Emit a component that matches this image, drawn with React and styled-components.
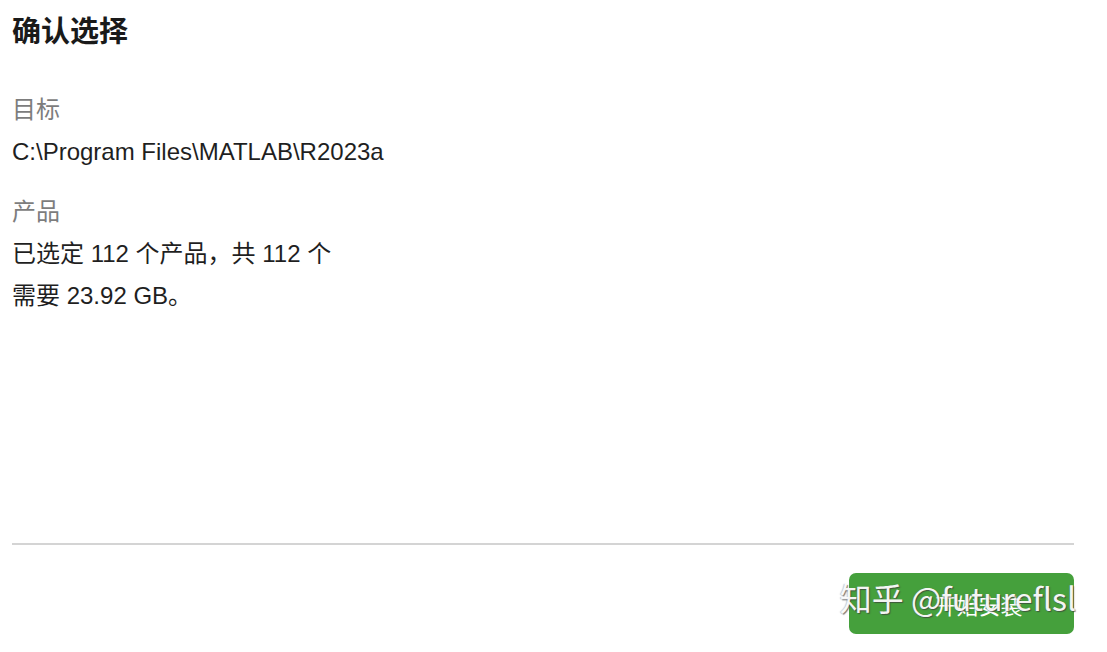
import React from "react";
import styled, { createGlobalStyle } from "styled-components";

const GlobalStyle = createGlobalStyle`
  html, body { margin: 0; padding: 0; background: #ffffff; }
  body {
    font-family: "Liberation Sans", "Noto Sans CJK SC", sans-serif;
    color: #1f1f1f;
  }
`;

const Page = styled.div`
  width: 1107px;
  height: 652px;
  box-sizing: border-box;
  padding: 12px 33px 18px 12px;
  display: flex;
  flex-direction: column;
`;

const Title = styled.h1`
  margin: 0;
  font-size: 29px;
  line-height: 40px;
  font-weight: 700;
  color: #1a1a1a;
`;

const Content = styled.div`
  flex: 1;
  display: flex;
  flex-direction: column;
  gap: 18px;
  padding-top: 37px;
`;

const Section = styled.section`
  display: flex;
  flex-direction: column;
`;

const Line = styled.div`
  font-size: 24px;
  line-height: 42px;
  color: ${(p) => (p.$muted ? "#7d7d7d" : "#1f1f1f")};
`;

const Divider = styled.hr`
  margin: 0;
  border: 0;
  border-top: 2px solid #d4d4d4;
`;

const Footer = styled.div`
  position: relative;
  display: flex;
  justify-content: flex-end;
  padding-top: 28px;
`;

const InstallButton = styled.button`
  width: 225px;
  height: 61px;
  border: 0;
  border-radius: 7px;
  background: #45a03c;
  color: #ffffff;
  font-family: "Liberation Sans", "Noto Sans CJK SC", sans-serif;
  font-size: 22px;
  padding-left: 40px;
  cursor: pointer;
`;

const Watermark = styled.div`
  position: absolute;
  right: -2px;
  top: 36px;
  font-family: "Noto Sans CJK SC", sans-serif;
  font-size: 32px;
  line-height: 1;
  color: rgba(255, 255, 255, 0.95);
  text-shadow: 1px 1px 1px rgba(60, 60, 60, 0.7), -1px 0 1px rgba(120, 120, 120, 0.4);
  pointer-events: none;
  white-space: nowrap;
`;

export default function App() {
  return (
    <>
      <GlobalStyle />
      <Page>
        <Title>确认选择</Title>
        <Content>
          <Section>
            <Line $muted>目标</Line>
            <Line>C:\Program Files\MATLAB\R2023a</Line>
          </Section>
          <Section>
            <Line $muted>产品</Line>
            <Line>已选定 112 个产品，共 112 个</Line>
            <Line>需要 23.92 GB。</Line>
          </Section>
        </Content>
        <Divider />
        <Footer>
          <InstallButton>开始安装</InstallButton>
          <Watermark>知乎 @futureflsl</Watermark>
        </Footer>
      </Page>
    </>
  );
}
